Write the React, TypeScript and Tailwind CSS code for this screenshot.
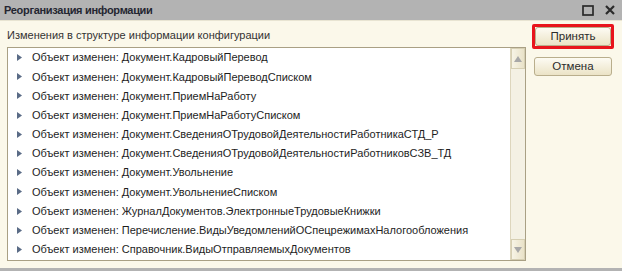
import { ReactNode } from 'react';

const changes = [
  "Документ.КадровыйПеревод",
  "Документ.КадровыйПереводСписком",
  "Документ.ПриемНаРаботу",
  "Документ.ПриемНаРаботуСписком",
  "Документ.СведенияОТрудовойДеятельностиРаботникаСТД_Р",
  "Документ.СведенияОТрудовойДеятельностиРаботниковСЗВ_ТД",
  "Документ.Увольнение",
  "Документ.УвольнениеСписком",
  "ЖурналДокументов.ЭлектронныеТрудовыеКнижки",
  "Перечисление.ВидыУведомленийОСпецрежимахНалогообложения",
  "Справочник.ВидыОтправляемыхДокументов"
];

function Button({ children }: { children: ReactNode }) {
  return (
    <div className="w-[78px] h-[19px] flex items-center justify-center rounded-[3px] border border-[#b9ae8c] bg-gradient-to-b from-[#fdfbf3] to-[#ebe3c6] text-[11.5px] text-[#2b2b2b]">
      {children}
    </div>
  );
}

function ScrollButton({ up }: { up: boolean }) {
  return (
    <div className="h-[21px] flex items-center justify-center border border-[#d6cfb3] bg-gradient-to-r from-[#f7f4e6] to-[#e9e2c8]">
      <svg width="8" height="6" viewBox="0 0 8 6">
        <path d={up ? "M0 6 L4 0 L8 6 Z" : "M0 0 L4 6 L8 0 Z"} fill="#a8a8a8" />
      </svg>
    </div>
  );
}

export default function App() {
  return (
    <div className="w-[622px] h-[271px] bg-[#b3b3b3] flex flex-col pb-[3px] overflow-hidden font-['Liberation_Sans',Arial,sans-serif]">
      {/* title bar */}
      <div className="h-[20px] flex items-center justify-between pl-[4px] pr-[7px]">
        <span className="text-[11px] font-bold tracking-[-0.3px] text-[#242631]">Реорганизация информации</span>
        <div className="flex items-center gap-[11px]">
          <svg width="12" height="11" viewBox="0 0 12 11">
            <rect x="1" y="1" width="10" height="9" fill="none" stroke="#2a2a2a" strokeWidth="1.7" />
          </svg>
          <svg width="10" height="10" viewBox="0 0 10 10">
            <path d="M1 1 L9 9 M9 1 L1 9" stroke="#2a2a2a" strokeWidth="2.2" />
          </svg>
        </div>
      </div>

      {/* body */}
      <div className="flex-1 bg-[#fbf8ea] border-t border-[#e8e4d2] flex">
        <div className="w-[526px] pl-[7px] pt-[6px] flex flex-col">
          <div className="h-[16px] leading-[16px] text-[11px] text-[#333]">
            Изменения в структуре информации конфигурации
          </div>
          <div className="mt-[4px] h-[214px] border border-[#a9a084] bg-white flex">
            <div className="flex-1">
              {changes.map((c, i) => (
                <div key={i} className="h-[19.2px] flex items-center text-[11px] text-[#1e1e1e]">
                  <span className="w-[24px] pl-[9px] flex items-center">
                    <svg width="5" height="7" viewBox="0 0 5 7">
                      <path d="M0 0 L5 3.5 L0 7 Z" fill="#5a6b86" />
                    </svg>
                  </span>
                  <span>Объект изменен: {c}</span>
                </div>
              ))}
            </div>
            <div className="w-[15px] bg-[#f4f1e4] border-l border-[#ddd6bd] flex flex-col justify-between">
              <ScrollButton up />
              <ScrollButton up={false} />
            </div>
          </div>
        </div>

        <div className="pl-[6px] pt-[3px] flex flex-col">
          <div className="w-[82px] h-[25px] border-[3px] border-[#e8141c] rounded-[2px] flex items-center justify-center">
            <Button>Принять</Button>
          </div>
          <div className="mt-[8px] ml-[2px]">
            <Button>Отмена</Button>
          </div>
        </div>
      </div>
    </div>
  );
}
